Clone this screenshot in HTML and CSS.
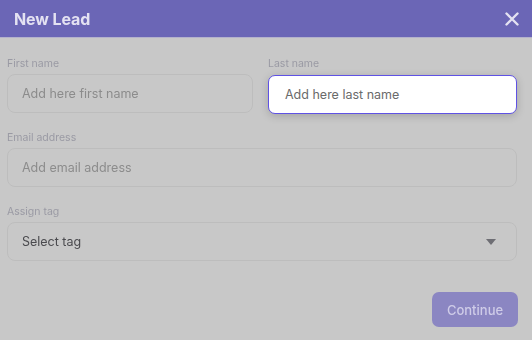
FILE: index.html
```html
<!DOCTYPE html>
<html>
<head>
<meta charset="utf-8">
<link rel="stylesheet" href="styles.css">
</head>
<body>
<div class="modal">
  <header class="head soft">
    <h1 class="title">New Lead</h1>
    <svg class="close" width="14" height="14" viewBox="0 0 14 14"><path d="M1.5 1.5 L12.5 12.5 M12.5 1.5 L1.5 12.5" stroke="#e4e2f2" stroke-width="2.4" stroke-linecap="round"/></svg>
  </header>
  <div class="body">
    <div class="row">
      <div class="field">
        <label class="label soft">First name</label>
        <div class="input soft">Add here first name</div>
      </div>
      <div class="field">
        <label class="label soft">Last name</label>
        <div class="input focus">Add here last name</div>
      </div>
    </div>
    <div class="field">
      <label class="label soft">Email address</label>
      <div class="input soft">Add email address</div>
    </div>
    <div class="field">
      <label class="label soft">Assign tag</label>
      <div class="input select soft"><span>Select tag</span><svg width="10" height="6" viewBox="0 0 10 6"><path d="M0 0 L10 0 L5 6 Z" fill="#6e6e74"/></svg></div>
    </div>
    <div class="actions">
      <button class="btn soft">Continue</button>
    </div>
  </div>
</div>
</body>
</html>
```
FILE: styles.css
```css
* { box-sizing: border-box; }
html, body { margin: 0; padding: 0; }
body {
  width: 532px;
  height: 340px;
  background: #c8c8c8;
  font-family: "Inter", "Lato", "Liberation Sans", sans-serif;
  overflow: hidden;
}
.soft { filter: blur(0.7px); }
.modal { width: 532px; height: 340px; background: #c8c8c8; }
.head {
  height: 38px;
  background: #6b66b6;
  display: flex;
  align-items: center;
  justify-content: space-between;
  padding: 0 13px 0 14px;
  border-bottom: 1px solid #b4b2cc;
}
.title {
  margin: 0;
  font-size: 16px;
  font-weight: 700;
  color: #e4e2f2;
  letter-spacing: -0.1px;
}
.close { display: block; }
.body {
  padding: 19px 15px 0 7px;
  display: flex;
  flex-direction: column;
  gap: 18px;
}
.row { display: flex; gap: 15px; }
.row .field { flex: 1; }
.row .field:last-child { flex: 0 0 249px; }
.field { display: flex; flex-direction: column; gap: 3px; }
.label {
  font-size: 10.5px;
  color: #9a9aa4;
  line-height: 14px;
}
.input {
  height: 39px;
  border: 1px solid #bdbdbd;
  border-radius: 8px;
  padding: 0 14px;
  display: flex;
  align-items: center;
  font-size: 12.5px;
  color: #8c8c8c;
}
.focus {
  background: #ffffff;
  border: 1px solid #5f52e4;
  border-radius: 7px;
  color: #6a6a6a;
  box-shadow: 0 2px 8px rgba(0,0,0,0.18);
  padding-left: 16px;
  position: relative;
  top: 1px;
}
.select { justify-content: space-between; color: #4a4a4e; padding-right: 20px; }
.actions { display: flex; justify-content: flex-end; margin-top: 13px; margin-right: -1px; }
.btn {
  width: 86px;
  height: 35px;
  border: none;
  border-radius: 7px;
  background: #8b86c2;
  color: #cfcce8;
  font-family: inherit;
  font-size: 13px;
  font-weight: 500;
}
```
